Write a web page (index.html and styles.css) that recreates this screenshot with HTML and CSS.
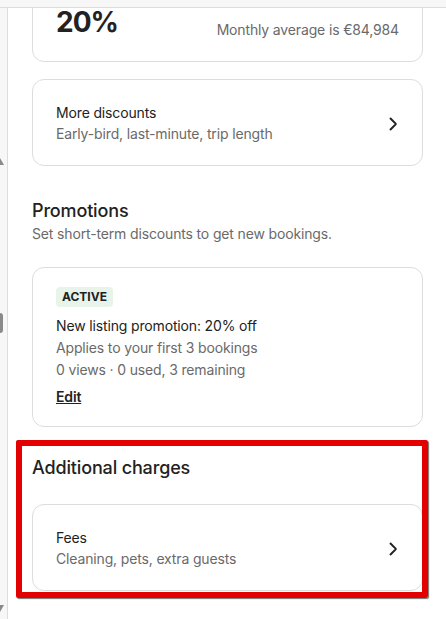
FILE: index.html
```html
<!DOCTYPE html>
<html lang="en">
<head>
<meta charset="utf-8">
<title>Pricing</title>
<link rel="stylesheet" href="styles.css">
</head>
<body>
<div class="topbar"></div>
<div class="frame">
  <div class="gutter">
    <span class="scroll-up"></span>
    <span class="scroll-thumb"></span>
    <span class="scroll-down"></span>
  </div>
  <main class="main">
    <div class="card card-discount">
      <div class="discount-row">
        <span class="discount-value">20%</span>
        <span class="discount-note">Monthly average is €84,984</span>
      </div>
    </div>

    <div class="card card-link card-gap">
      <div class="link-text">
        <div class="link-title">More discounts</div>
        <div class="link-sub">Early-bird, last-minute, trip length</div>
      </div>
      <svg class="chevron" viewBox="0 0 32 32" aria-hidden="true"><path d="m12 4 11.3 11.3a1 1 0 0 1 0 1.4L12 28"/></svg>
    </div>

    <section class="section section-promos">
      <h2 class="section-title">Promotions</h2>
      <p class="section-sub">Set short-term discounts to get new bookings.</p>
      <div class="card card-promo">
        <span class="badge">ACTIVE</span>
        <div class="promo-title">New listing promotion: 20% off</div>
        <div class="promo-line">Applies to your first 3 bookings</div>
        <div class="promo-line">0 views · 0 used, 3 remaining</div>
        <a class="promo-edit" href="#">Edit</a>
      </div>
    </section>

    <section class="section section-charges">
      <div class="highlight"></div>
      <h2 class="section-title">Additional charges</h2>
      <div class="card card-link card-fees">
        <div class="link-text">
          <div class="link-title">Fees</div>
          <div class="link-sub">Cleaning, pets, extra guests</div>
        </div>
        <svg class="chevron" viewBox="0 0 32 32" aria-hidden="true"><path d="m12 4 11.3 11.3a1 1 0 0 1 0 1.4L12 28"/></svg>
      </div>
    </section>
  </main>
</div>
</body>
</html>
```

FILE: styles.css
```css
* { box-sizing: border-box; }

html, body {
  margin: 0;
  padding: 0;
  height: 100%;
  overflow: hidden;
  background: #ffffff;
}

body {
  font-family: Inter, "Liberation Sans", Arial, sans-serif;
  color: #222222;
  display: flex;
  flex-direction: column;
  letter-spacing: -0.15px;
}

.topbar {
  height: 8px;
  flex: 0 0 8px;
  background: #f7f7f7;
  border-bottom: 1px solid #dddddd;
}

.frame {
  flex: 1;
  display: flex;
  min-height: 0;
}

.gutter {
  position: relative;
  width: 8px;
  flex: 0 0 8px;
  background: #f7f7f7;
  border-right: 1px solid #dddddd;
}

.scroll-up {
  position: absolute;
  left: 0;
  top: 150px;
  width: 0;
  height: 0;
  border-left: 4px solid transparent;
  border-right: 4px solid transparent;
  border-bottom: 7px solid #8a8a8a;
  margin-left: -4px;
}

.scroll-thumb {
  position: absolute;
  left: 0;
  top: 305px;
  width: 3px;
  height: 20px;
  background: #8a8a8a;
  border-radius: 0 3px 3px 0;
}

.scroll-down {
  position: absolute;
  left: 0;
  top: 597px;
  width: 0;
  height: 0;
  border-left: 4px solid transparent;
  border-right: 4px solid transparent;
  border-top: 7px solid #8a8a8a;
  margin-left: -4px;
}

.main {
  flex: 1;
  min-width: 0;
  overflow: hidden;
  padding: 0 23px 0 24px;
}

.card {
  border: 1px solid #dddddd;
  border-radius: 12px;
  background: #ffffff;
}

.card-discount {
  margin-top: -25px;
  padding: 24px 23px 25px 23px;
}

.discount-row {
  display: flex;
  justify-content: space-between;
  align-items: flex-end;
}

.discount-value {
  font-size: 28px;
  line-height: 28px;
  font-weight: 700;
  letter-spacing: -1px;
}

.discount-note {
  margin-bottom: -4px;
  font-size: 14px;
  line-height: 20px;
  color: #6a6a6a;
}

.card-gap { margin-top: 17px; }

.card-link {
  display: flex;
  align-items: center;
  justify-content: space-between;
  padding: 23px 22px 21px 23px;
}

.link-title {
  font-size: 14px;
  line-height: 20px;
}

.link-sub {
  margin-top: 1px;
  font-size: 14px;
  line-height: 20px;
  color: #6a6a6a;
}

.chevron {
  width: 16px;
  height: 16px;
  flex: 0 0 16px;
  fill: none;
  stroke: #222222;
  stroke-width: 4;
  overflow: visible;
}

.section-title {
  margin: 0;
  font-size: 18px;
  line-height: 24px;
  font-weight: 500;
}

.section-sub {
  margin: 1px 0 0;
  font-size: 14px;
  line-height: 20px;
  color: #6a6a6a;
}

.section-promos {
  margin-top: 33px;
}

.section-charges {
  position: relative;
  margin-top: 29px;
}

.card-promo {
  margin-top: 23px;
  padding: 19px 23px 19px 23px;
  display: flex;
  flex-direction: column;
  align-items: flex-start;
}

.badge {
  display: inline-block;
  height: 20px;
  padding: 0 6px;
  border-radius: 4px;
  background: #e8f4ea;
  font-size: 12px;
  line-height: 20px;
  font-weight: 700;
  letter-spacing: 0;
  color: #222222;
}

.promo-title {
  margin-top: 8px;
  font-size: 14px;
  line-height: 22px;
}

.promo-line {
  font-size: 14px;
  line-height: 22px;
  color: #6a6a6a;
}

.promo-edit {
  margin-top: 6px;
  font-size: 14px;
  line-height: 20px;
  font-weight: 600;
  color: #222222;
  text-decoration: underline;
}

.card-fees {
  margin-top: 24px;
}

.highlight {
  position: absolute;
  left: -16px;
  top: -16px;
  width: 412px;
  height: 158px;
  border: 6px solid #e30000;
  border-radius: 2px;
  box-shadow: 1px 1px 1px rgba(0, 0, 0, 0.55);
  z-index: 2;
  pointer-events: none;
}
```
